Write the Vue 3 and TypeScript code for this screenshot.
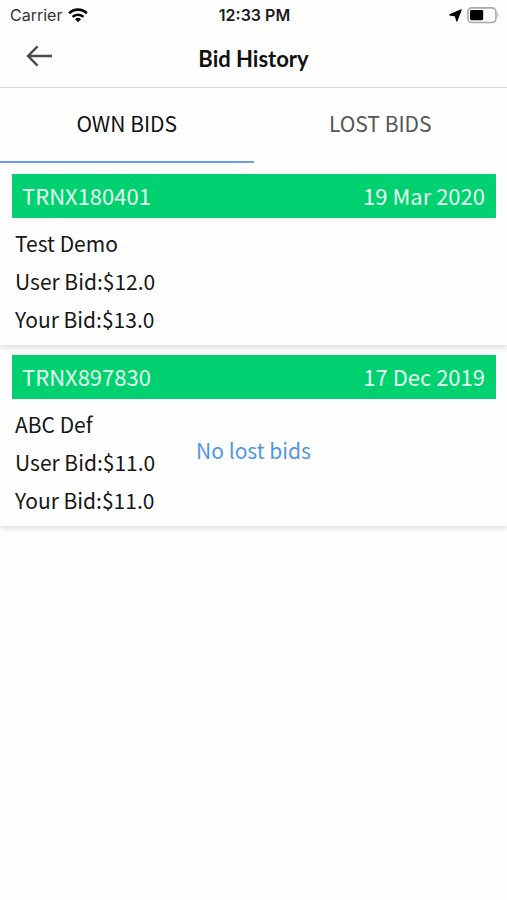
<script setup lang="ts">
import { ref } from 'vue'

interface Bid {
  id: string
  date: string
  title: string
  userBid: string
  yourBid: string
}

const tabs = ['OWN BIDS', 'LOST BIDS']
const activeTab = ref(0)

const bids: Bid[] = [
  { id: 'TRNX180401', date: '19 Mar 2020', title: 'Test Demo', userBid: '$12.0', yourBid: '$13.0' },
  { id: 'TRNX897830', date: '17 Dec 2019', title: 'ABC Def', userBid: '$11.0', yourBid: '$11.0' },
]
</script>

<template>
  <div class="screen">
    <div class="status">
      <div class="status-side">
        <span>Carrier</span>
        <svg viewBox="0 0 20 15" width="20" height="15" aria-hidden="true">
          <path d="M1.2 5.2 A12.6 12.6 0 0 1 18.8 5.2" fill="none" stroke="#000" stroke-width="2.8" />
          <path d="M4.5 8.9 A7.8 7.8 0 0 1 15.5 8.9" fill="none" stroke="#000" stroke-width="2.5" />
          <path d="M10 14.2 L7 11.3 A4.3 4.3 0 0 1 13 11.3 Z" fill="#000" />
        </svg>
      </div>
      <span class="time">12:33 PM</span>
      <div class="status-side end">
        <svg viewBox="0 0 13 13" width="13" height="13" aria-hidden="true">
          <path d="M12.2 0.8 L7.8 12 L6.4 7 L0.8 5.9 Z" fill="#000" stroke="#000" stroke-width="1.2" stroke-linejoin="round" />
        </svg>
        <svg viewBox="0 0 33 17" width="33" height="17" aria-hidden="true">
          <rect x="1.9" y="0.9" width="28" height="14.6" rx="4" fill="#fff" stroke="#a8a8a8" stroke-width="1.6" />
          <rect x="4" y="3" width="13.2" height="10.2" rx="1.4" fill="#000" />
          <path d="M31.4 5.6 Q33.4 8.1 31.4 10.6 Z" fill="#a8a8a8" />
        </svg>
      </div>
    </div>

    <header class="bar">
      <button class="back" type="button" aria-label="Back">
        <svg viewBox="0 0 28 22" width="28" height="22" aria-hidden="true">
          <path d="M12.6 1.4 L3 11 L12.6 20.6 M3 11 H27" fill="none" stroke="#4b4a50" stroke-width="2.4" />
        </svg>
      </button>
      <h1>Bid History</h1>
    </header>

    <div class="tabs" role="tablist">
      <button
        v-for="(tab, i) in tabs"
        :key="tab"
        type="button"
        role="tab"
        class="tab"
        :class="{ active: i === activeTab }"
        :aria-selected="i === activeTab"
        @click="activeTab = i"
      >
        {{ tab }}
      </button>
    </div>

    <main>
      <article v-for="bid in bids" :key="bid.id" class="card">
        <div class="card-head">
          <span>{{ bid.id }}</span>
          <span>{{ bid.date }}</span>
        </div>
        <div class="card-body">
          <p>{{ bid.title }}</p>
          <p>User Bid:{{ bid.userBid }}</p>
          <p>Your Bid:{{ bid.yourBid }}</p>
        </div>
      </article>
    </main>

    <p class="empty">No lost bids</p>
  </div>
</template>

<style>
body {
  background: #fefefe;
}
</style>

<style scoped>
.screen {
  position: relative;
  min-height: 100vh;
  background: #fefefe;
  color: #161616;
  font-family: "Noto Sans CJK JP", "Noto Sans", sans-serif;
  font-size: 21px;
}

p,
h1 {
  margin: 0;
}

button {
  padding: 0;
  border: 0;
  background: none;
  font: inherit;
  cursor: pointer;
}

.status {
  display: grid;
  grid-template-columns: 1fr auto 1fr;
  align-items: center;
  height: 30px;
  padding: 0 8px 0 10px;
  font-family: Inter, sans-serif;
  font-size: 16px;
  color: #333;
}

.status-side {
  display: flex;
  align-items: center;
  gap: 6px;
}

.end {
  gap: 4px;
  justify-content: flex-end;
}

.time {
  font-weight: 600;
  color: #1c1c1c;
}

.bar {
  display: grid;
  grid-template-columns: 60px 1fr 60px;
  align-items: center;
  height: 57px;
  border-bottom: 1px solid #dcdcdc;
}

.back {
  display: flex;
  align-items: center;
  height: 52px;
  padding-left: 25px;
  align-self: start;
}

h1 {
  font-family: Lato, sans-serif;
  font-size: 22px;
  font-weight: 700;
  line-height: 28px;
  text-align: center;
  color: #111;
}

.tabs {
  display: grid;
  grid-template-columns: 1fr 1fr;
}

.tab {
  height: 75px;
  padding-bottom: 4px;
  border-bottom: 2px solid transparent;
  color: #555;
}

.tab.active {
  border-bottom-color: #6b9de8;
  color: #111;
}

.card {
  padding: 11px 11px 7px 12px;
  box-shadow: 0 2px 6px rgba(0, 0, 0, 0.15);
  clip-path: inset(0 0 -10px 0);
}

.card + .card {
  margin-top: -1px;
}

.card-head {
  display: flex;
  justify-content: space-between;
  height: 44px;
  padding: 0 11px 0 10px;
  font-size: 22px;
  line-height: 42px;
  background: #00d170;
  color: #e4fff0;
}

.card-body {
  padding: 6px 3px 0;
  line-height: 38px;
}

.empty {
  position: absolute;
  top: 50vh;
  left: 50%;
  transform: translate(-50%, -50%);
  line-height: 32px;
  color: #5096e8;
  white-space: nowrap;
}
</style>
